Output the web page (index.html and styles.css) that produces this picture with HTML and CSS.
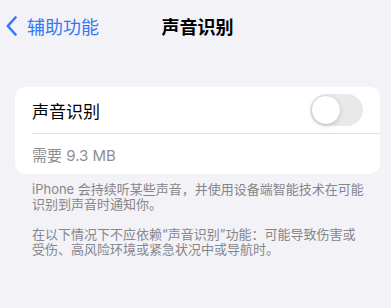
FILE: index.html
```html
<!DOCTYPE html>
<html lang="zh-CN">
<head>
    <meta charset="UTF-8">
    <meta name="viewport" content="width=device-width, initial-scale=1.0">
    <title>声音识别</title>
    <link rel="stylesheet" href="styles.css">
</head>
<body>
    <!-- Navigation bar -->
    <div class="nav">
        <a class="back" href="#">
            <svg class="chevron" width="11" height="20" viewBox="0 0 11 20">
                <path d="M9.5 1.5 L1.8 10 L9.5 18.5" fill="none" stroke="#3478f6" stroke-width="2.6" stroke-linecap="round" stroke-linejoin="round"/>
            </svg>
            <span>辅助功能</span>
        </a>
        <div class="title">声音识别</div>
        <div></div>
    </div>

    <!-- Settings group -->
    <div class="group">
        <div class="row">
            <span class="label">声音识别</span>
            <div class="switch"><div class="knob"></div></div>
        </div>
        <div class="row sub">
            <span class="detail">需要 9.3 MB</span>
        </div>
    </div>

    <!-- Footer notes -->
    <div class="footer">
        <p>iPhone 会持续听某些声音，并使用设备端智能技术在可能<br>识别到声音时通知你。</p>
        <p>在以下情况下不应依赖“声音识别”功能：可能导致伤害或<br>受伤、高风险环境或紧急状况中或导航时。</p>
    </div>
</body>
</html>
```

FILE: styles.css
```css
body {
    margin: 0;
    background: #f2f2f7;
    font-family: Inter, "Noto Sans CJK SC", sans-serif;
    color: #000;
}
.nav {
    height: 52px;
    display: grid;
    grid-template-columns: 1fr auto 1fr;
    align-items: center;
}
.back {
    display: flex;
    align-items: center;
    gap: 10px;
    padding-left: 6px;
    color: #3478f6;
    text-decoration: none;
    font-size: 18px;
}
.chevron {
    display: block;
}
.title {
    font-size: 18px;
    font-weight: 600;
    padding-left: 4px;
}
.group {
    margin: 35px 11px 0 15px;
    background: white;
    border-radius: 10px;
    padding-left: 17px;
}
.row {
    height: 46px;
    display: flex;
    align-items: center;
    justify-content: space-between;
    padding-right: 17px;
}
.row.sub {
    height: 40px;
    border-top: 1px solid #e2e2e6;
}
.label {
    font-size: 17px;
}
.detail {
    font-size: 15px;
    color: #8e8e93;
}
.switch {
    width: 53px;
    height: 32px;
    border-radius: 16px;
    background: #e9e9eb;
    padding: 2px;
    box-sizing: border-box;
}
.knob {
    width: 28px;
    height: 28px;
    border-radius: 50%;
    background: white;
    box-shadow: 0 2px 5px rgba(0, 0, 0, 0.15), 0 0 1px rgba(0, 0, 0, 0.2);
}
.footer {
    margin-top: 8px;
    padding: 0 20px 0 32px;
    font-size: 13px;
    line-height: 15px;
    color: #86868b;
}
.footer p {
    margin: 0 0 15px;
    white-space: nowrap;
}
```
